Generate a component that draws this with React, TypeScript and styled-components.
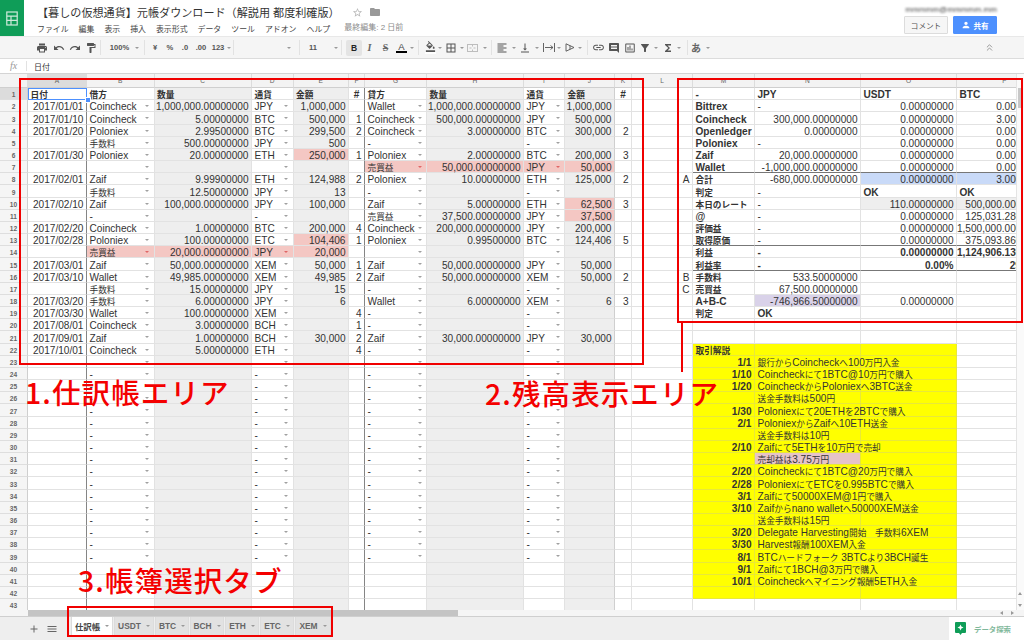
import React from "react";
import styled, { createGlobalStyle, css } from "styled-components";
import {
  MdPrint,
  MdUndo,
  MdRedo,
  MdFormatPaint,
  MdFormatColorFill,
  MdBorderAll,
  MdFormatAlignLeft,
  MdVerticalAlignBottom,
  MdLink,
  MdInsertComment,
  MdInsertChartOutlined,
  MdFilterAlt,
  MdFunctions,
  MdAdd,
  MdMenu,
  MdStarBorder,
  MdFolder,
  MdPerson,
} from "react-icons/md";
import { ChevronsUp } from "lucide-react";

const FONT = `"Liberation Sans", "Noto Sans CJK JP", sans-serif`;
const COLS = [28, 59, 67.5, 97.5, 41.5, 55.5, 16, 62, 97, 41, 50, 17, 61, 62, 106, 96, 96];
const LETTERS = ["", "A", "B", "C", "D", "E", "F", "G", "H", "I", "J", "K", "L", "M", "N", "O", "P"];
const ROW_HEIGHT = 12.17;

const PINK = "#f4c7c3";
const GRAY = "#eeeeee";
const YELLOW = "#ffff00";
const BLUE = "#c9daf8";
const PURPLE = "#d9d2e9";

/* ------------------------ DATA ---------------------- */

const LEDGER_HEAD = ["日付", "借方", "数量", "通貨", "金額", "#", "貸方", "数量", "通貨", "金額", "#"];

const LEDGER: string[][] = [
  ["2017/01/01", "Coincheck", "1,000,000.00000000", "JPY", "1,000,000", "", "Wallet", "1,000,000.00000000", "JPY", "1,000,000", ""],
  ["2017/01/10", "Coincheck", "5.00000000", "BTC", "500,000", "1", "Coincheck", "500,000.00000000", "JPY", "500,000", ""],
  ["2017/01/20", "Poloniex", "2.99500000", "BTC", "299,500", "2", "Coincheck", "3.00000000", "BTC", "300,000", "2"],
  ["", "手数料", "500.00000000", "JPY", "500", "", "-", "", "-", "", ""],
  ["2017/01/30", "Poloniex", "20.00000000", "ETH", "250,000", "1", "Poloniex", "2.00000000", "BTC", "200,000", "3"],
  ["", "", "", "", "", "", "売買益", "50,000.00000000", "JPY", "50,000", ""],
  ["2017/02/01", "Zaif", "9.99900000", "ETH", "124,988", "2", "Poloniex", "10.00000000", "ETH", "125,000", "2"],
  ["", "手数料", "12.50000000", "JPY", "13", "", "-", "", "-", "", ""],
  ["2017/02/10", "Zaif", "100,000.00000000", "JPY", "100,000", "", "Zaif", "5.00000000", "ETH", "62,500", "3"],
  ["", "-", "", "-", "", "", "売買益", "37,500.00000000", "JPY", "37,500", ""],
  ["2017/02/20", "Coincheck", "1.00000000", "BTC", "200,000", "4", "Coincheck", "200,000.00000000", "JPY", "200,000", ""],
  ["2017/02/28", "Poloniex", "100.00000000", "ETC", "104,406", "1", "Poloniex", "0.99500000", "BTC", "124,406", "5"],
  ["", "売買益", "20,000.00000000", "JPY", "20,000", "", "", "", "", "", ""],
  ["2017/03/01", "Zaif", "50,000.00000000", "XEM", "50,000", "1", "Zaif", "50,000.00000000", "JPY", "50,000", ""],
  ["2017/03/10", "Wallet", "49,985.00000000", "XEM", "49,985", "2", "Zaif", "50,000.00000000", "XEM", "50,000", "2"],
  ["", "手数料", "15.00000000", "JPY", "15", "", "-", "", "-", "", ""],
  ["2017/03/20", "手数料", "6.00000000", "JPY", "6", "", "Wallet", "6.00000000", "XEM", "6", "3"],
  ["2017/03/30", "Wallet", "100.00000000", "XEM", "", "4", "-", "", "-", "", ""],
  ["2017/08/01", "Coincheck", "3.00000000", "BCH", "", "1", "-", "", "-", "", ""],
  ["2017/09/01", "Zaif", "1.00000000", "BCH", "30,000", "2", "Zaif", "30,000.00000000", "JPY", "30,000", ""],
  ["2017/10/01", "Coincheck", "5.00000000", "ETH", "", "4", "-", "", "-", "", ""],
  ["", "", "", "", "", "", "", "", "", "", ""],
];

const LEDGER_BLANK = ["", "-", "", "-", "", "", "-", "", "-", "", ""];
const LEDGER_PINK = new Set(["6-4", "7-6", "7-7", "7-8", "7-9", "10-9", "11-9", "13-4", "14-1", "14-2", "14-3", "14-4"]);

type Balance = {
  note?: string;
  label: string;
  jpy?: string;
  usdt?: string;
  btc?: string;
  jpyBg?: string;
  usdtBg?: string;
  btcBg?: string;
  strong?: boolean;
  rule?: boolean;
};

const BALANCE: Balance[] = [
  { label: "-", jpy: "JPY", usdt: "USDT", btc: "BTC", strong: true },
  { label: "Bittrex", jpy: "-", usdt: "0.00000000", btc: "0.00000000" },
  { label: "Coincheck", jpy: "300,000.00000000", usdt: "0.00000000", btc: "3.00000000" },
  { label: "Openledger", jpy: "0.00000000", usdt: "0.00000000", btc: "0.00000000" },
  { label: "Poloniex", jpy: "-", usdt: "0.00000000", btc: "0.00000000" },
  { label: "Zaif", jpy: "20,000.00000000", usdt: "0.00000000", btc: "0.00000000" },
  { label: "Wallet", jpy: "-1,000,000.00000000", usdt: "0.00000000", btc: "0.00000000", rule: true },
  { note: "A", label: "合計", jpy: "-680,000.00000000", usdt: "0.00000000", btc: "3.00000000", usdtBg: BLUE, btcBg: BLUE },
  { label: "判定", jpy: "-", usdt: "OK", btc: "OK" },
  { label: "本日のレート", jpy: "-", usdt: "110.00000000", btc: "500,000.00000000", usdtBg: GRAY, btcBg: GRAY },
  { label: "@", jpy: "-", usdt: "0.00000000", btc: "125,031.28000000" },
  { label: "評価益", jpy: "-", usdt: "0.00000000", btc: "1,500,000.00000000" },
  { label: "取得原価", jpy: "-", usdt: "0.00000000", btc: "375,093.86000000", rule: true },
  { label: "利益", jpy: "-", usdt: "0.00000000", btc: "1,124,906.13000000", strong: true },
  { label: "利益率", jpy: "-", usdt: "0.00%", btc: "299.91%", strong: true, rule: true },
  { note: "B", label: "手数料", jpy: "533.50000000" },
  { note: "C", label: "売買益", jpy: "67,500.00000000" },
  { label: "A+B-C", jpy: "-746,966.50000000", usdt: "0.00000000", jpyBg: PURPLE },
  { label: "判定", jpy: "OK" },
];

const GUIDE_START = 22;
const GUIDE: [string, string][] = [
  ["取引解説", ""],
  ["1/1", "銀行からCoincheckへ100万円入金"],
  ["1/10", "Coincheckにて1BTC@10万円で購入"],
  ["1/20", "CoincheckからPoloniexへ3BTC送金"],
  ["", "送金手数料は500円"],
  ["1/30", "Poloniexにて20ETHを2BTCで購入"],
  ["2/1", "PoloniexからZaifへ10ETH送金"],
  ["", "送金手数料は10円"],
  ["2/10", "Zaifにて5ETHを10万円で売却"],
  ["", "売却益は3.75万円"],
  ["2/20", "Coincheckにて1BTC@20万円で購入"],
  ["2/28", "PoloniexにてETCを0.995BTCで購入"],
  ["3/1", "Zaifにて50000XEM@1円で購入"],
  ["3/10", "Zaifからnano walletへ50000XEM送金"],
  ["", "送金手数料は15円"],
  ["3/20", "Delegate Harvesting開始　手数料6XEM"],
  ["3/30", "Harvest報酬100XEM入金"],
  ["8/1", "BTCハードフォーク 3BTCより3BCH誕生"],
  ["9/1", "Zaifにて1BCH@3万円で購入"],
  ["10/1", "Coincheckへマイニング報酬5ETH入金"],
  ["", ""],
];

const MENU = ["ファイル", "編集", "表示", "挿入", "表示形式", "データ", "ツール", "アドオン", "ヘルプ"];
const TABS = ["仕訳帳", "USDT", "BTC", "BCH", "ETH", "ETC", "XEM"];

// whole pixels per row, so that every grid line lands on the screen the same way
const rowHeight = (row: number) => Math.round(row * ROW_HEIGHT) - Math.round((row - 1) * ROW_HEIGHT);

/* ------------------------ PAGE ---------------------- */

const GlobalStyle = createGlobalStyle`
  html, body { margin: 0; padding: 0; background: #fff; }
  body { font-family: ${FONT}; color: #333; }
`;

const Page = styled.div`
  position: relative;
  display: flex;
  flex-direction: column;
  width: 1024px;
  height: 640px;
  overflow: hidden;
`;

/* ------------------------ HEADER ---------------------- */

const Header = styled.header`
  display: flex;
  height: 36px;
  flex: none;
  background: #fff;
`;

const Logo = styled.div`
  display: flex;
  align-items: center;
  justify-content: center;
  width: 24px;
  background: #0f9d58;
`;

const DocInfo = styled.div`
  display: flex;
  flex-direction: column;
  padding: 6px 0 0 13px;
`;

const TitleRow = styled.div`
  display: flex;
  align-items: center;
  height: 12px;
  color: #b9b9b9;
`;

const Title = styled.span`
  width: 314.5px;
  font-size: 11.1px;
  color: #333;
  white-space: nowrap;
`;

const MenuRow = styled.nav`
  display: flex;
  align-items: center;
  margin-top: 4px;
  height: 12px;
  font-size: 7.9px;
  color: #444;
  gap: 10px;
`;

const LastEdit = styled.span`
  margin-left: 4px;
  margin-top: -4px;
  font-size: 8px;
  color: #8a8a8a;
`;

const Account = styled.div`
  display: flex;
  flex-direction: column;
  align-items: flex-end;
  margin-left: auto;
  padding: 5px 27px 0 0;
`;

const AccountName = styled.div`
  height: 9px;
  font-size: 8px;
  line-height: 9px;
  color: #444;
  filter: blur(1px);
  letter-spacing: 0.1px;
`;

const Buttons = styled.div`
  display: flex;
  gap: 5px;
  margin-top: 2px;
`;

const Button = styled.div<{ $primary?: boolean }>`
  display: flex;
  align-items: center;
  justify-content: center;
  gap: 2px;
  width: 44px;
  height: 18px;
  box-sizing: border-box;
  border-radius: 1px;
  font-size: 7.6px;
  font-weight: ${(props) => (props.$primary ? 700 : 400)};
  color: ${(props) => (props.$primary ? "#fff" : "#555")};
  background: ${(props) => (props.$primary ? "#4d90fe" : "#f6f6f6")};
  border: 1px solid ${(props) => (props.$primary ? "#4d90fe" : "#dcdcdc")};
`;

/* ------------------------ TOOLBAR ---------------------- */

const Toolbar = styled.div`
  display: flex;
  height: 23px;
  flex: none;
  box-sizing: border-box;
  background: #f5f5f5;
  border-top: 1px solid #e8e8e8;
  border-bottom: 1px solid #dcdcdc;
  color: #555;
`;

const ToolGroup = styled.div<{ $w: number; $pl?: number; $pr?: number; $end?: boolean; $plain?: boolean }>`
  display: flex;
  align-items: center;
  flex: none;
  box-sizing: border-box;
  width: ${(props) => props.$w}px;
  padding: 0 ${(props) => props.$pr ?? 0}px 0 ${(props) => props.$pl ?? 0}px;
  justify-content: ${(props) => (props.$end ? "flex-end" : "flex-start")};
  margin: 3px 0;
  border-right: ${(props) => (props.$plain ? "none" : "1px solid #e2e2e2")};
`;

const Slot = styled.div<{ $w: number; $on?: boolean }>`
  display: flex;
  align-items: center;
  justify-content: center;
  flex: none;
  width: ${(props) => props.$w}px;
  height: 16px;
  font-size: 7.6px;
  font-weight: 700;
  white-space: nowrap;
  color: #555;
  ${(props) =>
    props.$on &&
    css`
      background: #e4e4e4;
      border-radius: 2px;
      color: #222;
      font-size: 8.5px;
    `}
`;

const Drop = styled.i`
  display: block;
  width: 0;
  height: 0;
  border-left: 2px solid transparent;
  border-right: 2px solid transparent;
  border-top: 2px solid #999;
`;

const Letter = styled.span<{ $italic?: boolean; $strike?: boolean }>`
  font-family: "Liberation Serif", "Noto Sans CJK JP", serif;
  font-size: 10px;
  font-style: ${(props) => (props.$italic ? "italic" : "normal")};
  text-decoration: ${(props) => (props.$strike ? "line-through" : "none")};
  color: #666;
`;

const TextColor = styled.span`
  font-size: 9.5px;
  font-weight: 400;
  line-height: 9px;
  color: #444;
  border-bottom: 2.5px solid #000;
  padding: 0 2px;
`;

const FillSwatch = styled.span`
  display: flex;
  flex-direction: column;
  align-items: center;
  border-bottom: 2px solid #fff;
`;

const Collapse = styled.div`
  display: flex;
  align-items: center;
  margin-left: auto;
  padding-right: 29px;
  color: #777;
`;

/* ------------------------ FORMULA BAR ---------------------- */

const FormulaBar = styled.div`
  display: flex;
  align-items: center;
  flex: none;
  height: 15px;
  box-sizing: border-box;
  background: #fff;
  border-bottom: 1px solid #d4d4d4;
`;

const Fx = styled.span`
  width: 27px;
  box-sizing: border-box;
  padding-left: 10px;
  font-family: "Liberation Serif", serif;
  font-style: italic;
  font-size: 10px;
  color: #999;
  border-right: 1px solid #e2e2e2;
  line-height: 10px;
`;

const FormulaText = styled.span`
  margin-left: 7px;
  font-size: 8px;
  color: #333;
`;

/* ------------------------ SHEET ---------------------- */

const SheetArea = styled.div`
  display: flex;
  flex: 1;
  min-height: 0;
`;

const Viewport = styled.div`
  flex: 1;
  min-width: 0;
  overflow: hidden;
`;

const GridRow = styled.div<{ $h: number }>`
  display: grid;
  grid-template-columns: ${COLS.map((w) => `${w}px`).join(" ")};
  grid-template-rows: ${(props) => props.$h}px;
  width: max-content;
  height: ${(props) => props.$h}px;
`;

const ColHead = styled.div<{ $on?: boolean }>`
  display: flex;
  align-items: center;
  justify-content: center;
  box-sizing: border-box;
  font-size: 6.6px;
  color: #666;
  background: ${(props) => (props.$on ? "#dcdcdc" : "#f3f3f3")};
  border-right: 1px solid #dcdcdc;
  border-bottom: 1px solid #cfcfcf;
`;

const RowHead = styled.div<{ $on?: boolean }>`
  display: flex;
  align-items: center;
  justify-content: center;
  box-sizing: border-box;
  padding-top: 3px;
  font-size: 6.6px;
  line-height: 8px;
  font-weight: 700;
  color: #666;
  background: ${(props) => (props.$on ? "#dcdcdc" : "#f5f5f5")};
  border-right: 1px solid #cfcfcf;
  border-bottom: 1px solid #dedede;
`;

type CellProps = {
  $align?: "left" | "right" | "center" | "between";
  $bg?: string;
  $bold?: boolean;
  $edge?: string;
  $rule?: boolean;
  $over?: boolean;
  $line?: string;
};

const ALIGN = { left: "flex-start", right: "flex-end", center: "center", between: "space-between" };

const Cell = styled.div<CellProps>`
  display: flex;
  align-items: center;
  justify-content: ${(props) => ALIGN[props.$align ?? "left"]};
  box-sizing: border-box;
  min-width: 0;
  padding: 3.5px 2.5px 0;
  font-size: 10.1px;
  line-height: 10px;
  white-space: nowrap;
  color: #333;
  font-weight: ${(props) => (props.$bold ? 700 : 400)};
  background: ${(props) => props.$bg ?? "#fff"};
  border-right: 1px solid ${(props) => props.$edge ?? props.$line ?? "#e2e2e2"};
  border-bottom: 1px solid ${(props) => (props.$rule ? "#777" : props.$line ?? "#e2e2e2")};
  ${(props) =>
    props.$over &&
    css`
      position: relative;
      z-index: 1;
    `}
`;

const Caret = styled.i<{ $red?: boolean }>`
  display: block;
  flex: none;
  margin: -3px 2px 0 0;
  width: 0;
  height: 0;
  border-left: 2.5px solid transparent;
  border-right: 2.5px solid transparent;
  border-top: 2.5px solid ${(props) => (props.$red ? "#e06666" : "#a0a0a0")};
`;

const Handle = styled.div`
  position: absolute;
  left: 85px;
  top: 97.5px;
  width: 4px;
  height: 4px;
  background: #4d90fe;
  border: 1px solid #fff;
  box-sizing: content-box;
  margin: -0.5px;
`;

const Selection = styled.div`
  position: absolute;
  left: 28px;
  top: 88px;
  width: 59px;
  height: 12px;
  box-sizing: border-box;
  border: 1.5px solid #4d90fe;
`;

const Jp = styled.span`
  font-size: 0.86em;
`;

function Mixed(props: { text: string }) {
  const parts = props.text.split(/([\u3000-\u9fff\uff00-\uffef]+)/);
  return (
    <span>
      {parts.map((part, i) => (i % 2 === 1 ? <Jp key={i}>{part}</Jp> : part))}
    </span>
  );
}

function LedgerCells(props: { row: number }) {
  const { row } = props;
  const head = row === 1;
  let values = LEDGER_BLANK.map(() => "");
  if (head) values = LEDGER_HEAD;
  else if (row <= 23) values = LEDGER[row - 2];
  else if (row <= 39) values = LEDGER_BLANK;

  return (
    <>
      {values.map((value, col) => {
        const pick = col === 1 || col === 3 || col === 6 || col === 8;
        const shaded = col === 2 || col === 4 || col === 7 || col === 9;
        const count = col === 5 || col === 10;
        const pink = LEDGER_PINK.has(`${row}-${col}`);
        const edge = col === 0 || col === 5 ? "#858585" : col === 9 ? "#cfcfcf" : undefined;
        const bg = pink ? PINK : shaded ? GRAY : "#fff";
        if (head) {
          return (
            <Cell key={col} $bold $bg={bg} $edge={edge} $align={count ? "center" : "left"}>
              <Mixed text={value} />
            </Cell>
          );
        }
        if (pick) {
          return (
            <Cell key={col} $bg={bg} $align={row <= 39 ? "between" : "left"}>
              <Mixed text={value} />
              {row <= 39 && <Caret $red={pink} />}
            </Cell>
          );
        }
        return (
          <Cell key={col} $bg={bg} $edge={edge} $align="right">
            {value}
          </Cell>
        );
      })}
    </>
  );
}

function GuideCells(props: { row: number }) {
  const [date, text] = GUIDE[props.row - GUIDE_START];
  const first = props.row === GUIDE_START;
  const line = "#e8e83a";
  return (
    <>
      <Cell $align="right" />
      <Cell $bg={YELLOW} $line={line} $bold $align={first ? "left" : "right"}>
        <Mixed text={date} />
      </Cell>
      <Cell $bg={text.startsWith("売却益") ? "#e6c3c8" : YELLOW} $line={line} $over>
        <Mixed text={text} />
      </Cell>
      <Cell $bg={YELLOW} $line={line} />
      <Cell />
    </>
  );
}

function BalanceCells(props: { row: number }) {
  const { row } = props;
  if (row >= GUIDE_START && row < GUIDE_START + GUIDE.length) {
    return <GuideCells row={row} />;
  }
  const item = BALANCE[row - 1];
  if (!item) {
    return (
      <>
        <Cell />
        <Cell />
        <Cell />
        <Cell />
        <Cell />
      </>
    );
  }
  const isNumber = (value?: string) => !!value && /^-?[\d,.]+%?$/.test(value);
  const amount = (value?: string, bg?: string) => {
    const bold = item.strong || value === "OK";
    return (
      <Cell $bg={bg} $bold={bold} $rule={item.rule} $align={isNumber(value) ? "right" : "left"}>
        {value}
      </Cell>
    );
  };
  return (
    <>
      <Cell $align="right">{item.note}</Cell>
      <Cell $bold $rule={item.rule}>
        <Mixed text={item.label} />
      </Cell>
      {amount(item.jpy, item.jpyBg)}
      {amount(item.usdt, item.usdtBg)}
      {amount(item.btc, item.btcBg)}
    </>
  );
}

const VScroll = styled.div`
  display: flex;
  flex-direction: column;
  align-items: center;
  flex: none;
  width: 8.5px;
  box-sizing: border-box;
  background: #fafafa;
  border-left: 1px solid #e4e4e4;
  padding: 14px 0 3px;
`;

const VThumb = styled.div`
  width: 5px;
  height: 20px;
  background: #c8c8c8;
`;

const ScrollUp = styled.i`
  margin-top: auto;
  width: 0;
  height: 0;
  border-left: 2px solid transparent;
  border-right: 2px solid transparent;
  border-bottom: 3px solid #999;
`;

const ScrollDown = styled.i`
  margin-top: 9px;
  width: 0;
  height: 0;
  border-left: 2px solid transparent;
  border-right: 2px solid transparent;
  border-top: 3px solid #999;
`;

const HScroll = styled.div`
  display: flex;
  align-items: center;
  flex: none;
  height: 6px;
  padding-left: 28px;
  background: #f5f5f5;
`;

const HThumb = styled.div`
  width: 430px;
  height: 100%;
  background: #c4c4c4;
`;

const ScrollLeft = styled.i`
  margin-left: auto;
  width: 0;
  height: 0;
  border-top: 2px solid transparent;
  border-bottom: 2px solid transparent;
  border-right: 3px solid #999;
`;

const ScrollRight = styled.i`
  margin: 0 10px 0 8px;
  width: 0;
  height: 0;
  border-top: 2px solid transparent;
  border-bottom: 2px solid transparent;
  border-left: 3px solid #999;
`;

/* ------------------------ TABS ---------------------- */

const TabBar = styled.div`
  display: flex;
  flex: none;
  height: 24px;
  background: #eeeeee;
  border-top: 1px solid #cfcfcf;
  box-sizing: border-box;
`;

const TabTools = styled.div`
  display: flex;
  align-items: center;
  flex: none;
  width: 71px;
  box-sizing: border-box;
  padding: 0 0 0 28px;
  gap: 6px;
  color: #666;
`;

const TabList = styled.div`
  display: flex;
  align-items: flex-start;
  height: 19.5px;
  gap: 1px;
`;

const Tab = styled.div<{ $active?: boolean; $w: number }>`
  display: flex;
  align-items: center;
  justify-content: center;
  gap: 5px;
  box-sizing: border-box;
  width: ${(props) => props.$w}px;
  height: 19.5px;
  font-size: 8.4px;
  font-weight: 700;
  color: ${(props) => (props.$active ? "#444" : "#666")};
  background: ${(props) => (props.$active ? "#fff" : "#e2e2e2")};
  border: 1px solid #dcdcdc;
  border-top: none;
`;

const Explore = styled.div`
  display: flex;
  align-items: center;
  gap: 8px;
  margin-left: auto;
  width: 75px;
  box-sizing: border-box;
  padding-left: 6px;
  background: #fff;
  font-size: 7.4px;
  font-weight: 700;
  color: #7fb89b;
`;

/* ------------------------ ANNOTATIONS ---------------------- */

const redFrame = css`
  position: absolute;
  box-sizing: border-box;
  border: 2px solid #f00000;
  pointer-events: none;
  z-index: 5;
`;

const LedgerFrame = styled.div`
  ${redFrame}
  left: 19px;
  top: 78px;
  width: 625px;
  height: 287px;
`;

const BalanceFrame = styled.div`
  ${redFrame}
  left: 677px;
  top: 78px;
  width: 346px;
  height: 245px;
`;

const TabsFrame = styled.div`
  ${redFrame}
  left: 67px;
  top: 606px;
  width: 266px;
  height: 31px;
`;

const Connector = styled.div`
  position: absolute;
  left: 681px;
  top: 322px;
  width: 2px;
  height: 50px;
  background: #f00000;
  z-index: 5;
`;

const callout = css`
  position: absolute;
  z-index: 5;
  font-family: "Noto Sans CJK JP", sans-serif;
  font-size: 28.5px;
  font-weight: 500;
  letter-spacing: 1.1px;
  line-height: 32px;
  color: #f40000;
  white-space: nowrap;
`;

const LedgerCallout = styled.div`
  ${callout}
  left: 25px;
  top: 376px;
`;

const BalanceCallout = styled.div`
  ${callout}
  left: 485px;
  top: 377px;
`;

const TabsCallout = styled.div`
  ${callout}
  left: 78px;
  top: 564px;
`;

/* ------------------------ APP ---------------------- */

export default function App() {
  const rows = Array.from({ length: 44 }, (_, i) => i + 1);
  return (
    <Page>
      <GlobalStyle />
      <Header>
        <Logo>
          <svg width="12" height="15" viewBox="0 0 12 15" fill="none" stroke="#cfe9db" strokeWidth="1.2">
            <rect x="0.8" y="1" width="10.4" height="13" />
            <path d="M0.8 5.2h10.4M0.8 9.4h10.4M5 5.2V14" />
          </svg>
        </Logo>
        <DocInfo>
          <TitleRow>
            <Title>【暮しの仮想通貨】元帳ダウンロード（解説用 都度利確版）</Title>
            <MdStarBorder size={11} />
            <MdFolder size={12} color="#999" style={{ marginLeft: 6 }} />
          </TitleRow>
          <MenuRow>
            {MENU.map((item) => (
              <span key={item}>{item}</span>
            ))}
            <LastEdit>最終編集: 2 日前</LastEdit>
          </MenuRow>
        </DocInfo>
        <Account>
          <AccountName>mmmmm@mmmmm.mm</AccountName>
          <Buttons>
            <Button>コメント</Button>
            <Button $primary>
              <MdPerson size={10} />
              共有
            </Button>
          </Buttons>
        </Account>
      </Header>

      <Toolbar>
        <ToolGroup $w={101} $pl={34}>
          <Slot $w={16}><MdPrint size={12} /></Slot>
          <Slot $w={17}><MdUndo size={12} /></Slot>
          <Slot $w={16}><MdRedo size={12} /></Slot>
          <Slot $w={16}><MdFormatPaint size={12} /></Slot>
        </ToolGroup>
        <ToolGroup $w={44} $pl={8}>
          <Slot $w={21}>100%</Slot>
          <Slot $w={14}><Drop /></Slot>
        </ToolGroup>
        <ToolGroup $w={89} $pl={3}>
          <Slot $w={14}>¥</Slot>
          <Slot $w={16}>%</Slot>
          <Slot $w={14}>.0</Slot>
          <Slot $w={18}>.00</Slot>
          <Slot $w={16}>123</Slot>
          <Slot $w={6}><Drop /></Slot>
        </ToolGroup>
        <ToolGroup $w={66} $end $pr={7}>
          <Slot $w={6}><Drop /></Slot>
        </ToolGroup>
        <ToolGroup $w={42} $pl={5}>
          <Slot $w={16}>11</Slot>
          <Slot $w={30}><Drop /></Slot>
        </ToolGroup>
        <ToolGroup $w={77} $pl={4}>
          <Slot $w={16} $on>B</Slot>
          <Slot $w={15}><Letter $italic>I</Letter></Slot>
          <Slot $w={17}><Letter $strike>S</Letter></Slot>
          <Slot $w={15}><TextColor>A</TextColor></Slot>
          <Slot $w={6}><Drop /></Slot>
        </ToolGroup>
        <ToolGroup $w={73} $pl={5}>
          <Slot $w={12}><FillSwatch><MdFormatColorFill size={11} /></FillSwatch></Slot>
          <Slot $w={8}><Drop /></Slot>
          <Slot $w={14}><MdBorderAll size={12} /></Slot>
          <Slot $w={7}><Drop /></Slot>
          <Slot $w={15}>
            <svg width="11" height="8" viewBox="0 0 11 8" fill="none" stroke="#bdbdbd">
              <rect x="0.5" y="0.5" width="10" height="7" />
              <path d="M5.5 0.5v2M5.5 5.5v2M2.5 4h2M6.5 4h2" />
            </svg>
          </Slot>
          <Slot $w={10}><Drop /></Slot>
        </ToolGroup>
        <ToolGroup $w={96} $pl={4}>
          <Slot $w={12}><MdFormatAlignLeft size={12} /></Slot>
          <Slot $w={11}><Drop /></Slot>
          <Slot $w={12}><MdVerticalAlignBottom size={12} /></Slot>
          <Slot $w={12}><Drop /></Slot>
          <Slot $w={12}>
            <svg width="12" height="9" viewBox="0 0 12 9" fill="none" stroke="#555" strokeWidth="0.9">
              <path d="M0.5 0v9M11.5 0v9M2 4.5h8M7.5 2.5l2.5 2-2.5 2" />
            </svg>
          </Slot>
          <Slot $w={8}><Drop /></Slot>
          <Slot $w={14}>
            <svg width="10" height="9" viewBox="0 0 10 9" fill="none" stroke="#555" strokeWidth="0.9">
              <path d="M1 0.8L9 4.5 1 8.2zM5 2.6v3.8" />
            </svg>
          </Slot>
          <Slot $w={6}><Drop /></Slot>
        </ToolGroup>
        <ToolGroup $w={100} $pl={2}>
          <Slot $w={16}><MdLink size={13} /></Slot>
          <Slot $w={16}><MdInsertComment size={12} /></Slot>
          <Slot $w={15}><MdInsertChartOutlined size={12} /></Slot>
          <Slot $w={15}><MdFilterAlt size={12} /></Slot>
          <Slot $w={8}><Drop /></Slot>
          <Slot $w={16}><MdFunctions size={12} /></Slot>
          <Slot $w={6}><Drop /></Slot>
        </ToolGroup>
        <ToolGroup $w={30} $pl={1} $plain>
          <Slot $w={14}><Letter>あ</Letter></Slot>
          <Slot $w={10}><Drop /></Slot>
        </ToolGroup>
        <Collapse>
          <ChevronsUp size={11} strokeWidth={1.6} />
        </Collapse>
      </Toolbar>

      <FormulaBar>
        <Fx>fx</Fx>
        <FormulaText>日付</FormulaText>
      </FormulaBar>

      <SheetArea>
        <Viewport>
          <GridRow $h={14}>
            {LETTERS.map((letter, i) => (
              <ColHead key={i} $on={letter === "A"}>
                {letter}
              </ColHead>
            ))}
          </GridRow>
          {rows.map((row) => (
            <GridRow key={row} $h={rowHeight(row)}>
              <RowHead $on={row === 1}>{row}</RowHead>
              <LedgerCells row={row} />
              <BalanceCells row={row} />
            </GridRow>
          ))}
        </Viewport>
        <VScroll>
          <VThumb />
          <ScrollUp />
          <ScrollDown />
        </VScroll>
      </SheetArea>

      <HScroll>
        <HThumb />
        <ScrollLeft />
        <ScrollRight />
      </HScroll>

      <TabBar>
        <TabTools>
          <MdAdd size={12} />
          <MdMenu size={12} />
        </TabTools>
        <TabList>
          {TABS.map((tab, i) => (
            <Tab key={tab} $active={i === 0} $w={i === 0 ? 42 : i === 1 ? 40 : i === 6 ? 36 : 34}>
              {tab}
              <Drop />
            </Tab>
          ))}
        </TabList>
        <Explore>
          <svg width="11" height="13" viewBox="0 0 11 13">
            <path d="M0 1a1 1 0 0 1 1-1h9a1 1 0 0 1 1 1v9a1 1 0 0 1-1 1H7l-1.5 2L4 11H1a1 1 0 0 1-1-1z" fill="#0f9d58" />
            <path d="M5.5 2.5l.9 2.1 2.1.9-2.1.9-.9 2.1-.9-2.1-2.1-.9 2.1-.9z" fill="#fff" />
          </svg>
          データ探索
        </Explore>
      </TabBar>

      <Selection />
      <Handle />
      <LedgerFrame />
      <BalanceFrame />
      <TabsFrame />
      <Connector />
      <LedgerCallout>1.仕訳帳エリア</LedgerCallout>
      <BalanceCallout>2.残高表示エリア</BalanceCallout>
      <TabsCallout>3.帳簿選択タブ</TabsCallout>
    </Page>
  );
}
